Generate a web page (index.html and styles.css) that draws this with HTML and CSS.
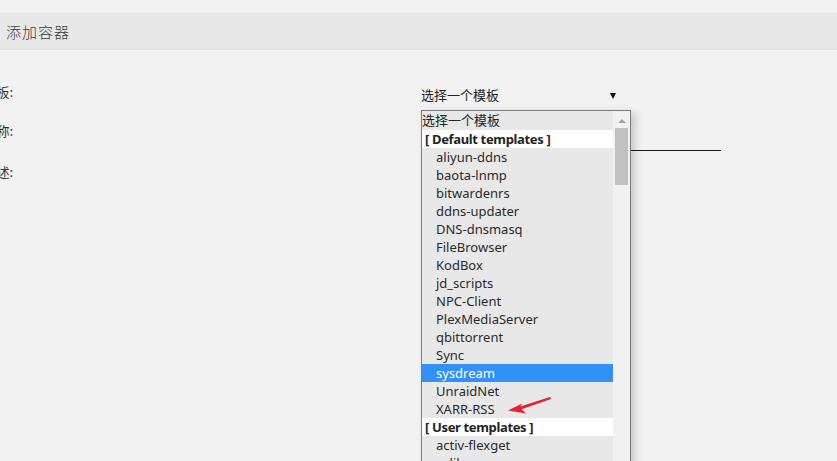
FILE: index.html
```html
<!DOCTYPE html>
<html lang="zh">
<head>
<meta charset="utf-8">
<title>添加容器</title>
<link rel="stylesheet" href="styles.css">
</head>
<body>
<div class="page">
  <div class="titlebar"><span class="title">添加容器</span></div>
  <div class="form">
    <div class="row row-template">
      <div class="label">模板:</div>
      <div class="field select-wrap">
        <div class="select">
          <span>选择一个模板</span>
          <span class="caret"></span>
        </div>
        <div class="dropdown">
          <div class="list">
            <div class="opt first">选择一个模板</div>
            <div class="group">[ Default templates ]</div>
            <div class="opt">aliyun-ddns</div>
            <div class="opt">baota-lnmp</div>
            <div class="opt">bitwardenrs</div>
            <div class="opt">ddns-updater</div>
            <div class="opt">DNS-dnsmasq</div>
            <div class="opt">FileBrowser</div>
            <div class="opt">KodBox</div>
            <div class="opt">jd_scripts</div>
            <div class="opt">NPC-Client</div>
            <div class="opt">PlexMediaServer</div>
            <div class="opt">qbittorrent</div>
            <div class="opt">Sync</div>
            <div class="opt selected">sysdream</div>
            <div class="opt">UnraidNet</div>
            <div class="opt">XARR-RSS</div>
            <div class="group">[ User templates ]</div>
            <div class="opt">activ-flexget</div>
            <div class="opt">calibre</div>
          </div>
          <div class="scrollbar">
            <div class="up"></div>
            <div class="thumb"></div>
          </div>
        </div>
        <svg class="pointer" width="60" height="30" viewBox="0 0 60 30">
          <polygon points="0,18.5 14,11.5 12.5,14.6 42,5 43,7 13.5,17.3 18,21.5" fill="#e8202a"/>
        </svg>
      </div>
    </div>
    <div class="row row-name">
      <div class="label">名称:</div>
      <div class="field input"></div>
    </div>
    <div class="row row-desc">
      <div class="label">描述:</div>
    </div>
  </div>
</div>
</body>
</html>
```

FILE: styles.css
```css
html, body {
  margin: 0;
  padding: 0;
  background: #f2f2f2;
  font-family: "Noto Sans", "Noto Sans CJK SC", sans-serif;
  color: #222;
  overflow: hidden;
}

.page {
  padding-top: 13px;
  height: 448px;
}

.titlebar {
  height: 36px;
  background: #e8e8e8;
  border-bottom: 1px solid #dedede;
  display: flex;
  align-items: center;
  padding-left: 6px;
}

.title {
  font-family: "Noto Sans CJK SC", sans-serif;
  font-size: 15px;
  letter-spacing: 1px;
  color: #3a3a3a;
  font-weight: 300;
}

.form {
  padding-top: 28px;
}

.row {
  display: flex;
  align-items: flex-start;
}

.label {
  flex: 0 0 100px;
  margin-left: -87px;
  text-align: right;
  font-family: "Noto Sans CJK SC", sans-serif;
  font-size: 13px;
  line-height: 28px;
  color: #333;
}

.field {
  margin-left: 408px;
}

.select-wrap {
  position: relative;
  width: 197px;
}

.select {
  display: flex;
  justify-content: space-between;
  align-items: center;
  font-family: "Noto Sans CJK SC", sans-serif;
  font-size: 13px;
  line-height: 26px;
  padding: 4px 0 2px;
  border-bottom: 1px solid #1a1a1a;
}

.caret {
  width: 0;
  height: 0;
  border-left: 3px solid transparent;
  border-right: 3px solid transparent;
  border-top: 6px solid #111;
  margin-right: 2px;
  margin-top: 1px;
}

.row-name {
  margin-top: 6px;
}

.input {
  width: 300px;
  height: 33px;
  border-bottom: 1px solid #1a1a1a;
}

.row-desc {
  margin-top: 7px;
}

.dropdown {
  position: absolute;
  left: 0;
  top: 32px;
  width: 208px;
  height: 360px;
  border: 1px solid #7b7b7b;
  background: #e8e8e8;
  box-shadow: 4px 3px 8px rgba(0, 0, 0, 0.18);
  display: flex;
  z-index: 2;
}

.list {
  flex: 0 0 191px;
  font-size: 13px;
}

.opt {
  height: 18px;
  line-height: 18px;
  padding-left: 14px;
  color: #2a2a2a;
  white-space: nowrap;
}

.opt.first {
  height: 19px;
  line-height: 17px;
  padding-left: 0;
  font-family: "Noto Sans CJK SC", sans-serif;
  color: #222;
}

.group {
  height: 18px;
  line-height: 18px;
  padding-left: 3px;
  background: #ffffff;
  font-weight: bold;
  letter-spacing: -0.35px;
  color: #222;
  white-space: nowrap;
}

.opt.selected {
  background: #3191f9;
  color: #ffffff;
}

.scrollbar {
  flex: 1;
  background: #f1f1f1;
  position: relative;
}

.up {
  position: absolute;
  left: 5px;
  top: 8px;
  width: 0;
  height: 0;
  border-left: 4px solid transparent;
  border-right: 4px solid transparent;
  border-bottom: 4px solid #a3a3a3;
}

.thumb {
  position: absolute;
  left: 2px;
  right: 2px;
  top: 17px;
  height: 57px;
  background: #c1c1c1;
}

.pointer {
  position: absolute;
  left: 87px;
  top: 314px;
  z-index: 3;
}
```
